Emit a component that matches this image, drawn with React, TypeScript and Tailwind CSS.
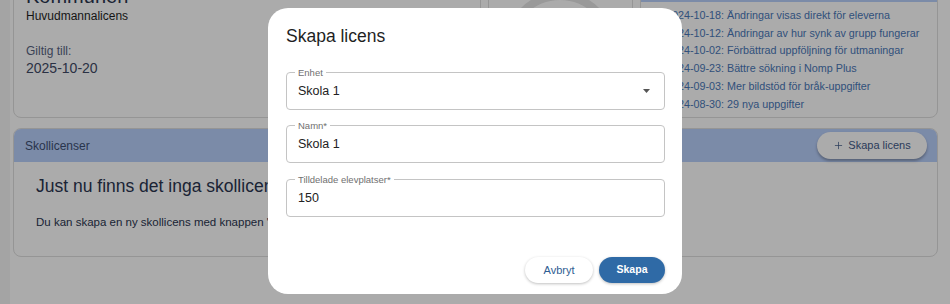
import { Plus } from 'lucide-react';

const news = [
  '2024-10-18: Ändringar visas direkt för eleverna',
  '2024-10-12: Ändringar av hur synk av grupp fungerar',
  '2024-10-02: Förbättrad uppföljning för utmaningar',
  '2024-09-23: Bättre sökning i Nomp Plus',
  '2024-09-03: Mer bildstöd för bråk-uppgifter',
  '2024-08-30: 29 nya uppgifter',
];

function OutlinedField({ label, value, select }: { label: string; value: string; select?: boolean }) {
  return (
    <div className="relative flex h-[38px] items-center justify-between rounded-[4px] border border-[#c4c4c4] pl-[11px] pr-[14px]">
      <span className="absolute -top-[6px] left-[8px] bg-white px-[3px] text-[9.5px] leading-[11px] text-[#707070]">
        {label}
      </span>
      <span className="text-[12.5px] text-[#222]">{value}</span>
      {select && (
        <svg width="7" height="4" viewBox="0 0 7 4">
          <path d="M0 0 L7 0 L3.5 4 Z" fill="#555" />
        </svg>
      )}
    </div>
  );
}

export default function App() {
  return (
    <div className="relative h-[304px] w-[950px] overflow-hidden bg-white font-['Liberation_Sans',Arial,sans-serif]">
      <div className="flex h-full">
        <div className="w-[10px] shrink-0 bg-[#f5f5f5]" />
        <div className="flex-1 pl-[3px] pr-[12px]">
          <div className="-mt-[30px] flex h-[148px] gap-[7px]">
            <div className="flex w-[468px] flex-col rounded-[8px] border border-[#dedede] px-[12px] pt-[13px]">
              <div className="text-[20px] leading-[24px] text-[#2a3550]">Kommunen</div>
              <div className="text-[12px] leading-[16px] text-[#1f1f1f]">Huvudmannalicens</div>
              <div className="mt-[19px] text-[12px] leading-[16px] text-[#57637f]">Giltig till:</div>
              <div className="text-[14px] leading-[18px] text-[#3f4a66]">2025-10-20</div>
            </div>
            <div className="w-[145px] rounded-[8px] border border-[#dedede]">
              <svg width="143" height="146" viewBox="0 0 143 146">
                <circle cx="71" cy="77" r="52" fill="none" stroke="#e4e4e4" strokeWidth="8" />
              </svg>
            </div>
            <div className="flex-1 overflow-hidden rounded-[8px] border border-[#dedede]">
              <div className="h-[31px] bg-[#b8cffb]" />
              <ul className="pl-[25px] pt-[5px] text-[10.75px] leading-[17.7px] text-[#4a78b8]">
                {news.map((n) => (
                  <li key={n}>{n}</li>
                ))}
              </ul>
            </div>
          </div>

          <div className="mt-[10px] h-[129px] overflow-hidden rounded-[8px] border border-[#dedede]">
            <div className="flex h-[33px] items-center justify-between bg-[#b8cffb] pl-[11px] pr-[10px]">
              <span className="text-[12px] text-[#3d4f73]">Skollicenser</span>
              <button className="flex h-[27px] w-[110px] items-center justify-center gap-[4px] rounded-full bg-white text-[11px] font-medium text-[#3f5a88] shadow-[0_2px_3px_rgba(0,0,0,0.3)]">
                <Plus size={11} strokeWidth={1.6} />
                Skapa licens
              </button>
            </div>
            <div className="pl-[22px] pt-[13px]">
              <div className="text-[17.5px] leading-[22px] text-[#2a3550]">Just nu finns det inga skollicenser</div>
              <div className="mt-[17px] text-[11.5px] leading-[16px] text-[#2a3550]">
                Du kan skapa en ny skollicens med knappen "Skapa licens"
              </div>
            </div>
          </div>
        </div>
      </div>

      <div className="absolute inset-0 bg-black/[0.33]" />

      <div className="absolute left-[268px] top-[8px] h-[286px] w-[414px] rounded-[20px] bg-white pl-[18px] pr-[17px] pt-[17px]">
        <div className="text-[17.5px] leading-[22px] text-[#1f1f1f]">Skapa licens</div>
        <div className="mt-[25px]">
          <OutlinedField label="Enhet" value="Skola 1" select />
        </div>
        <div className="mt-[15px]">
          <OutlinedField label="Namn*" value="Skola 1" />
        </div>
        <div className="mt-[16px]">
          <OutlinedField label="Tilldelade elevplatser*" value="150" />
        </div>
        <div className="mt-[40px] flex justify-end gap-[6px]">
          <button className="h-[26px] w-[68px] rounded-full bg-white text-[11px] font-medium text-[#2f5d92] shadow-[0_1px_3px_rgba(0,0,0,0.25)]">
            Avbryt
          </button>
          <button className="h-[26px] w-[66px] rounded-full bg-[#2f6aa6] text-[10.5px] font-semibold text-white shadow-[0_1px_3px_rgba(0,0,0,0.25)]">
            Skapa
          </button>
        </div>
      </div>
    </div>
  );
}
